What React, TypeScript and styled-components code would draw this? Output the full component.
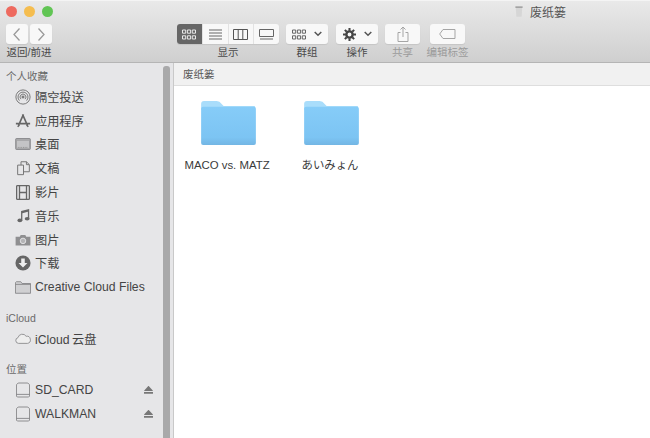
import React from 'react';
import styled, { createGlobalStyle } from 'styled-components';

const FONT = `"Liberation Sans", "Noto Sans CJK SC", sans-serif`;

const GlobalStyle = createGlobalStyle`
  html, body { margin: 0; padding: 0; background: #fff; }
  body { font-family: ${FONT}; }
`;

const Stroke: React.FC<{ d: string; w?: number; h?: number; color?: string; sw?: number }> = ({ d, w = 16, h = 16, color = '#666', sw = 1 }) => (
  <svg width={w} height={h} viewBox={`0 0 ${w} ${h}`} fill="none" stroke={color} strokeWidth={sw}>
    <path d={d} />
  </svg>
);

const GridIcon: React.FC<{ color: string }> = ({ color }) => (
  <Stroke w={14} h={11} color={color} d="M.5 1h3.200v3.200H.5zM5.400 1h3.200v3.200H5.400zM10.300 1h3.200v3.200h-3.200zM.5 6.800h3.200V10H.5zM5.400 6.800h3.200V10H5.400zM10.300 6.800h3.200V10h-3.200z" />
);

const Chevron = () => <Stroke w={8} h={6} color="#555" sw={1.5} d="M.7 1l3.300 3.300L7.300 1" />;

const GearIcon = () => (
  <svg width={13} height={13} viewBox="0 0 14 14">
    <circle cx="7" cy="7" r="3.4" fill="none" stroke="#444" strokeWidth="2.6" />
    <path d="M7 0v3M7 11v3M0 7h3M11 7h3M2 2l2 2M10 10l2 2M12 2l-2 2M4 10l-2 2" stroke="#444" strokeWidth="2.2" />
  </svg>
);

const sidebarIcons: Record<string, React.ReactNode> = {
  airdrop: (
    <svg width={16} height={16} viewBox="0 0 18 18" fill="none" stroke="#777" strokeWidth="1.1">
      <circle cx="9" cy="9" r="8" />
      <path d="M5 13a5.6 5.6 0 1 1 8 0M6.700 11.400a3.300 3.300 0 1 1 4.600 0" />
      <circle cx="9" cy="9" r="1.200" fill="#777" />
    </svg>
  ),
  apps: (
    <svg width={16} height={16} viewBox="0 0 18 18" fill="none" stroke="#666" strokeWidth="1.800">
      <path d="M9.500 1.500L4 14M8.500 1.500L14 14M1 12h16M3 15.500l2-2M15 15.500l-2-2" />
    </svg>
  ),
  desktop: (
    <svg width={16} height={12} viewBox="0 0 18 14">
      <rect x=".5" y=".5" width="17" height="13" rx="1" fill="#a9a9ab" stroke="#808082" />
      <rect x="2" y="3.500" width="14" height="8" fill="#c4c4c6" />
      <path d="M3 11h12" stroke="#888" strokeDasharray="1 1" />
    </svg>
  ),
  docs: (
    <svg width={15} height={16} viewBox="0 0 18 18" fill="none" stroke="#777" strokeWidth="1.200">
      <path d="M2 5.500h7v11.500H2zM6 5.500V1.500h6.500l3.500 3.500v8.500H9M12.500 1.500V5H16" />
    </svg>
  ),
  movies: (
    <svg width={14} height={15} viewBox="0 0 16 17" fill="none" stroke="#666" strokeWidth="1.500">
      <rect x=".7" y=".7" width="14.600" height="15.600" rx="1" />
      <path d="M4 .7v15.600M12 .7v15.600M4 8.500h8" />
    </svg>
  ),
  music: (
    <svg width={13} height={15} viewBox="0 0 16 17" fill="#666">
      <path d="M5 3l10-2.500v12h-1.600V4L6.600 5.700V15H5z" />
      <ellipse cx="3.500" cy="14.500" rx="3" ry="2.200" />
      <ellipse cx="12.500" cy="12.500" rx="3" ry="2.200" />
    </svg>
  ),
  photos: (
    <svg width={16} height={12} viewBox="0 0 17 13">
      <path d="M.5 3h4.500l1-2h5l1 2h4.500v9.500H.5z" fill="#8f8f91" />
      <circle cx="8.500" cy="7.500" r="3" fill="#b5b5b7" stroke="#e4e4e6" />
    </svg>
  ),
  downloads: (
    <svg width={16} height={16} viewBox="0 0 18 18">
      <circle cx="9" cy="9" r="8.500" fill="#666" />
      <path d="M7 4h4v5h3l-5 5-5-5h3z" fill="#eee" />
    </svg>
  ),
  folder: (
    <svg width={16} height={13} viewBox="0 0 18 14" fill="#d0d0d2" stroke="#858587">
      <path d="M.5 13.500V1.500l1-1h5l1.500 2h9.500v11z" />
      <path d="M.5 3.500h17" />
    </svg>
  ),
  cloud: (
    <svg width={16} height={11} viewBox="0 0 18 12" fill="#eee" stroke="#8a8a8c">
      <path d="M4 11.500a3.300 3.300 0 0 1-.6-6.500A5 5 0 0 1 12.500 3.500a4 4 0 0 1 1.500 8z" />
    </svg>
  ),
  disk: (
    <svg width={14} height={16} viewBox="0 0 16 17" fill="none" stroke="#808082">
      <path d="M2.500.5h11l2 2v13l-1 1h-13l-1-1v-13z" />
      <path d="M.5 13.500h15" />
    </svg>
  ),
};

const Folder = () => (
  <svg width={55} height={44} viewBox="0 0 56 45">
    <defs>
      <linearGradient id="front" x1="0" y1="0" x2="0" y2="1">
        <stop offset="0" stopColor="#86ccf8" />
        <stop offset="0.8" stopColor="#7cc4f3" />
        <stop offset="1" stopColor="#73b6e4" />
      </linearGradient>
    </defs>
    <path d="M0 3q0-3 3-3h13q3 0 5 3l2 2h32v4H0z" fill="#a9ddfb" />
    <path d="M0 8q0-2 2-2h52q2 0 2 2v35q0 2-2 2H2q-2 0-2-2z" fill="url(#front)" />
  </svg>
);

const favourites = [
  { icon: 'airdrop', label: '隔空投送' },
  { icon: 'apps', label: '应用程序' },
  { icon: 'desktop', label: '桌面' },
  { icon: 'docs', label: '文稿' },
  { icon: 'movies', label: '影片' },
  { icon: 'music', label: '音乐' },
  { icon: 'photos', label: '图片' },
  { icon: 'downloads', label: '下载' },
  { icon: 'folder', label: 'Creative Cloud Files' },
];

const App: React.FC = () => (
  <Window>
    <GlobalStyle />
    <Toolbar>
      <TitleRow>
        <Lights>
          <Light color="#ee6a5f" />
          <Light color="#f5bd4f" />
          <Light color="#61c554" />
        </Lights>
        <Title>
          <svg width={8} height={13} viewBox="0 0 10 14">
            <path d="M1 2h8l-.7 11.500H1.700z" fill="#d6d6d6" />
            <path d="M.5 1.500h9" stroke="#8a8a8a" strokeWidth="1.500" />
          </svg>
          废纸篓
        </Title>
      </TitleRow>
      <Tools>
        <Tool $width={46} $mr={125}>
          <ButtonRow>
            <Btn $w={22}><Stroke w={10} h={15} color="#9a9a9a" sw={1.300} d="M7.500 1.500L2 7.500l5.500 6" /></Btn>
            <Btn $w={22}><Stroke w={10} h={15} color="#9a9a9a" sw={1.300} d="M2.500 1.500L8 7.500l-5.500 6" /></Btn>
          </ButtonRow>
          <ToolLabel>返回/前进</ToolLabel>
        </Tool>
        <Tool $width={102} $mr={7}>
          <Segments>
            <Segment $active><GridIcon color="#e8e8e8" /></Segment>
            <Segment><Stroke w={15} h={11} color="#666" d="M1 1h13M1 4h13M1 7h13M1 10h13" /></Segment>
            <Segment><Stroke w={15} h={11} color="#555" d="M.5 .5h14v10H.5zM5.200 .5v10M9.800 .5v10" /></Segment>
            <Segment><Stroke w={15} h={11} color="#666" d="M.5 .5h14v7H.5zM1 10h13" /></Segment>
          </Segments>
          <ToolLabel>显示</ToolLabel>
        </Tool>
        <Tool $width={42} $mr={8}>
          <Btn $w={42}><Inner><GridIcon color="#666" /><Chevron /></Inner></Btn>
          <ToolLabel>群组</ToolLabel>
        </Tool>
        <Tool $width={42} $mr={7}>
          <Btn $w={42}><Inner><GearIcon /><Chevron /></Inner></Btn>
          <ToolLabel>操作</ToolLabel>
        </Tool>
        <Tool $width={35} $mr={10} $dim>
          <Btn $w={35}><Stroke w={12} h={16} color="#a5a5a5" d="M1 6.500h2.500M8.500 6.500H11v9H1v-9M6 11V1M3.500 3.500L6 1l2.500 2.500" /></Btn>
          <ToolLabel>共享</ToolLabel>
        </Tool>
        <Tool $width={35} $mr={0} $dim>
          <Btn $w={35}><Stroke w={17} h={10} color="#a5a5a5" d="M4 .5h12v9H4L.7 5z" /></Btn>
          <ToolLabel>编辑标签</ToolLabel>
        </Tool>
      </Tools>
    </Toolbar>
    <Body>
      <Sidebar>
        <SidebarList>
          <SectionLabel>个人收藏</SectionLabel>
          {favourites.map((f) => (
            <Row key={f.label}>
              <RowIcon>{sidebarIcons[f.icon]}</RowIcon>
              <RowLabel>{f.label}</RowLabel>
            </Row>
          ))}
          <SectionLabel $gap>iCloud</SectionLabel>
          <Row>
            <RowIcon>{sidebarIcons.cloud}</RowIcon>
            <RowLabel>iCloud{'\u2009'}云盘</RowLabel>
          </Row>
          <SectionLabel $gap>位置</SectionLabel>
          <Row>
            <RowIcon>{sidebarIcons.disk}</RowIcon>
            <RowLabel>SD_CARD</RowLabel>
            <Eject />
          </Row>
          <Row>
            <RowIcon>{sidebarIcons.disk}</RowIcon>
            <RowLabel>WALKMAN</RowLabel>
            <Eject />
          </Row>
          <SectionLabel $gap>标签</SectionLabel>
        </SidebarList>
        <Scrollbar />
      </Sidebar>
      <Main>
        <PathBar>废纸篓</PathBar>
        <Files>
          <FileItem>
            <Folder />
            <FileName>MACO vs. MATZ</FileName>
          </FileItem>
          <FileItem>
            <Folder />
            <FileName>あいみょん</FileName>
          </FileItem>
        </Files>
      </Main>
    </Body>
  </Window>
);

const Window = styled.div`
  width: 650px;
  height: 438px;
  display: flex;
  flex-direction: column;
  overflow: hidden;
  background: #fff;
  font-family: ${FONT};
`;

const Toolbar = styled.div`
  height: 63px;
  flex: none;
  box-sizing: border-box;
  background: linear-gradient(#e9e9e9, #cfcfcf);
  border-top: 1px solid #f4f4f4;
  border-bottom: 1px solid #b5b5b5;
`;

const TitleRow = styled.div`
  height: 20px;
  display: flex;
  align-items: center;
  padding-left: 6px;
`;

const Lights = styled.div`
  display: flex;
  gap: 7px;
  width: 509px;
`;

const Light = styled.span<{ color: string }>`
  width: 11px;
  height: 11px;
  border-radius: 50%;
  background: ${(p) => p.color};
`;

const Title = styled.div`
  display: flex;
  align-items: center;
  gap: 7px;
  font-size: 12px;
  color: #555;
`;

const Tools = styled.div`
  display: flex;
  padding: 3px 0 0 6px;
`;

const Tool = styled.div<{ $width: number; $mr: number; $dim?: boolean }>`
  width: ${(p) => p.$width}px;
  margin-right: ${(p) => p.$mr}px;
  display: flex;
  flex-direction: column;
  align-items: center;
  color: ${(p) => (p.$dim ? '#9b9b9b' : '#4a4a4a')};
`;

const ButtonRow = styled.div`
  display: flex;
  gap: 2px;
`;

const Btn = styled.div<{ $w: number }>`
  width: ${(p) => p.$w}px;
  height: 20px;
  flex: none;
  display: flex;
  align-items: center;
  justify-content: center;
  background: #f8f8f8;
  border-radius: 3px;
  box-shadow: 0 1px 1px rgba(0, 0, 0, 0.08);
`;

const Inner = styled.div`
  display: flex;
  align-items: center;
  gap: 8px;
`;

const Segments = styled.div`
  width: 102px;
  height: 20px;
  display: flex;
  border-radius: 3px;
  overflow: hidden;
  background: #f8f8f8;
  box-shadow: 0 1px 1px rgba(0, 0, 0, 0.08);
`;

const Segment = styled.div<{ $active?: boolean }>`
  flex: 1;
  display: flex;
  align-items: center;
  justify-content: center;
  background: ${(p) => (p.$active ? '#666' : 'transparent')};
  & + & {
    border-left: 1px solid #e2e2e2;
  }
`;

const ToolLabel = styled.div`
  font-size: 10.5px;
  line-height: 12px;
  margin-top: 2px;
  white-space: nowrap;
`;

const Body = styled.div`
  flex: 1;
  min-height: 0;
  display: flex;
`;

const Sidebar = styled.div`
  width: 174px;
  flex: none;
  display: flex;
  background: #e6e6e8;
  border-right: 1px solid #c9c9c9;
  box-sizing: border-box;
  overflow: hidden;
`;

const SidebarList = styled.div`
  flex: 1;
  min-width: 0;
  padding: 6px 0 0 6px;
`;

const SectionLabel = styled.div<{ $gap?: boolean }>`
  height: 14px;
  line-height: 14px;
  font-size: 10.5px;
  color: #6a6a6a;
  margin-top: ${(p) => (p.$gap ? '11.5px' : '0')};
  margin-bottom: 2px;
`;

const Row = styled.div`
  height: 23.8px;
  display: flex;
  align-items: center;
  padding-right: 10px;
`;

const RowIcon = styled.span`
  width: 20px;
  margin-left: 7px;
  flex: none;
  display: flex;
  align-items: center;
  justify-content: center;
`;

const RowLabel = styled.span`
  margin-left: 2px;
  flex: 1;
  font-size: 12.2px;
  color: #444;
  white-space: nowrap;
`;

const Eject = styled.span`
  width: 9px;
  height: 8px;
  flex: none;
  background: linear-gradient(#777 0 5px, transparent 5px 6px, #777 6px 8px);
  clip-path: polygon(50% 0, 100% 62%, 100% 100%, 0 100%, 0 62%);
`;

const Scrollbar = styled.div`
  width: 7px;
  flex: none;
  margin: 3px 3px 0 0;
  background: #a9a9aa;
  border-radius: 3px 3px 0 0;
`;

const Main = styled.div`
  flex: 1;
  min-width: 0;
  display: flex;
  flex-direction: column;
`;

const PathBar = styled.div`
  height: 22px;
  flex: none;
  padding-left: 9px;
  line-height: 22px;
  font-size: 10.5px;
  color: #555;
  background: #f1f1f1;
  border-bottom: 1px solid #dedede;
`;

const Files = styled.div`
  display: flex;
  padding: 15px 0 0 3px;
  gap: 3px;
`;

const FileItem = styled.div`
  width: 100px;
  display: flex;
  flex-direction: column;
  align-items: center;

  svg {
    margin-left: 2px;
  }
`;

const FileName = styled.div`
  margin-top: 13px;
  font-size: 11.4px;
  line-height: 14px;
  color: #3a3a3a;
  white-space: nowrap;
`;

export default App;
